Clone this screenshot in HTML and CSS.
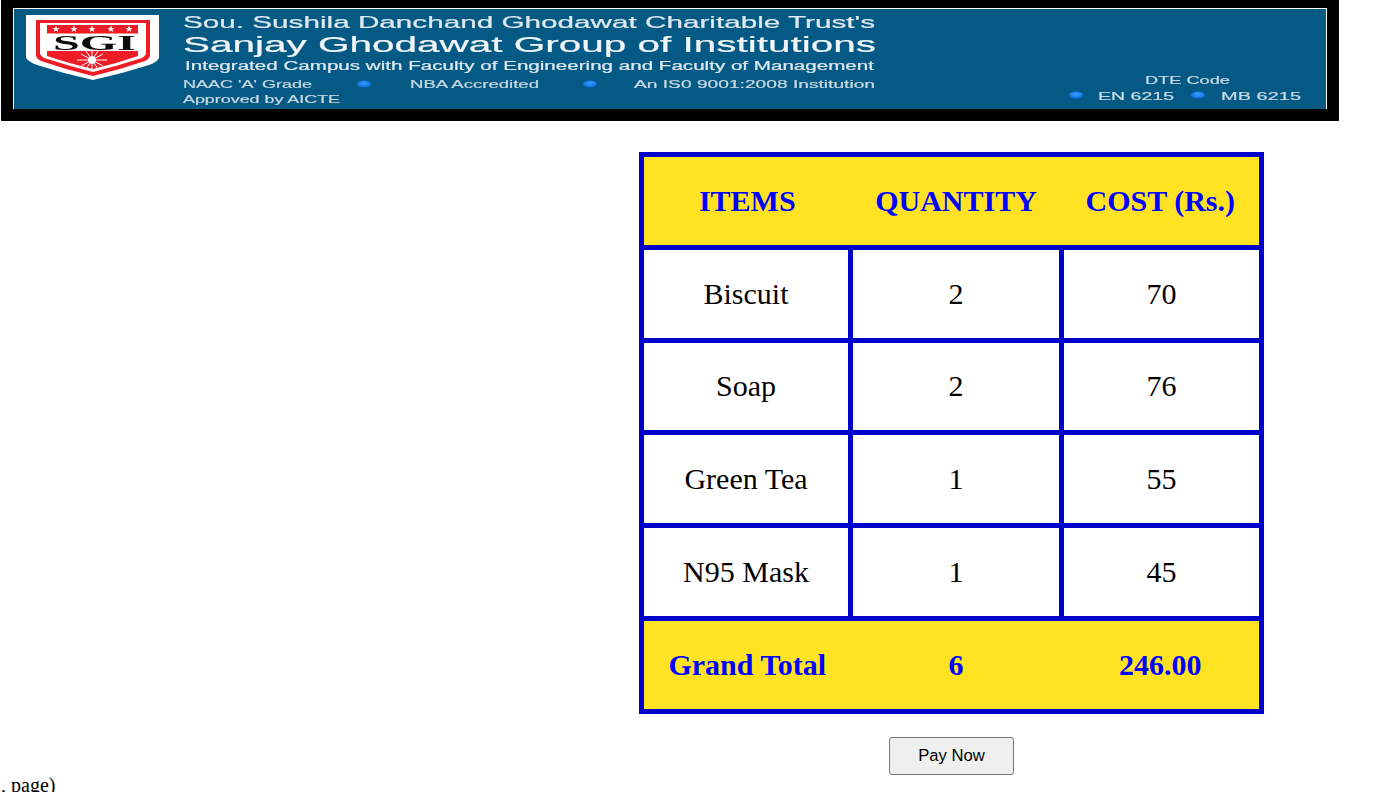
FILE: index.html
```html
<!DOCTYPE html>
<html lang="en">
<head>
<meta charset="utf-8">
<title>Bill</title>
<link rel="stylesheet" href="styles.css">
</head>
<body>
<header class="banner">
<svg class="banner-art" width="1338" height="121" viewBox="0 0 1338 121" xmlns="http://www.w3.org/2000/svg">
  <defs>
    <filter id="soft" x="-2%" y="-2%" width="104%" height="104%"><feGaussianBlur stdDeviation="0.5"/></filter>
    <radialGradient id="dot" cx="50%" cy="40%" r="60%"><stop offset="0" stop-color="#35a2ff"/><stop offset="1" stop-color="#0a68e0"/></radialGradient>
  </defs>
  <rect class="b-black" width="1338" height="121"/>
  <rect class="b-white" x="12" y="8" width="1314" height="101"/>
  <rect class="b-blue" x="13" y="9" width="1312" height="100"/>
  <g filter="url(#soft)" transform="translate(-2 0)">
    <path class="s-white" d="M27 15H160V58Q158 62 150 65Q122 74 94 80Q66 74 38 65Q30 62 27 58Z"/>
    <path class="s-red" d="M37 20H151V56Q150 59 146 61Q120 70 94 76Q68 70 42 61Q38 59 37 56Z"/>
    <path class="s-white" d="M41 23H147V54Q146 56 143 58Q118 66 94 72Q70 66 45 58Q42 56 41 54Z"/>
    <rect class="s-red" x="48" y="25" width="91" height="8.500"/>
    <path class="s-red" d="M48 51H139V56Q116 64 94 69Q72 64 48 56Z"/>
    <g class="s-star">
      <path d="M57 25.500l1 2.400h2.500l-2 1.600.8 2.500-2.300-1.500-2.300 1.500.8-2.500-2-1.600h2.500z"/>
      <path d="M75 25.500l1 2.400h2.500l-2 1.600.8 2.500-2.300-1.500-2.300 1.500.8-2.500-2-1.600h2.500z"/>
      <path d="M93 25.500l1 2.400h2.500l-2 1.600.8 2.500-2.300-1.500-2.300 1.500.8-2.500-2-1.600h2.500z"/>
      <path d="M112 25.500l1 2.400h2.500l-2 1.600.8 2.500-2.300-1.500-2.300 1.500.8-2.500-2-1.600h2.500z"/>
      <path d="M130 25.500l1 2.400h2.500l-2 1.600.8 2.500-2.300-1.500-2.300 1.500.8-2.500-2-1.600h2.500z"/>
    </g>
    <text class="t-sgi" x="54" y="49.500" textLength="83" lengthAdjust="spacingAndGlyphs">SGI</text>
    <g class="s-sun">
      <circle cx="93" cy="60" r="3.500"/>
      <path d="M78 60H108M82 54L104 66M82 66L104 54M87 51L99 69M99 51L87 69M93 50V70"/>
    </g>
    <text class="t-l1" x="184" y="28" textLength="692" lengthAdjust="spacingAndGlyphs">Sou. Sushila Danchand Ghodawat Charitable Trust's</text>
    <text class="t-l2" x="184" y="52" textLength="693" lengthAdjust="spacingAndGlyphs">Sanjay Ghodawat Group of Institutions</text>
    <text class="t-l3" x="186" y="69.500" textLength="689" lengthAdjust="spacingAndGlyphs">Integrated Campus with Faculty of Engineering and Faculty of Management</text>
    <text class="t-s" x="184" y="87.500" textLength="129" lengthAdjust="spacingAndGlyphs">NAAC 'A' Grade</text>
    <text class="t-s" x="411" y="87.500" textLength="129" lengthAdjust="spacingAndGlyphs">NBA Accredited</text>
    <text class="t-s" x="635" y="87.500" textLength="241" lengthAdjust="spacingAndGlyphs">An IS0 9001:2008 Institution</text>
    <text class="t-s" x="184" y="102.500" textLength="157" lengthAdjust="spacingAndGlyphs">Approved by AICTE</text>
    <text class="t-s" x="1146" y="83.500" textLength="85" lengthAdjust="spacingAndGlyphs">DTE Code</text>
    <text class="t-s" x="1099" y="99.500" textLength="76" lengthAdjust="spacingAndGlyphs">EN 6215</text>
    <text class="t-s" x="1222" y="99.500" textLength="80" lengthAdjust="spacingAndGlyphs">MB 6215</text>
    <ellipse cx="365" cy="84" rx="7" ry="3.500" fill="url(#dot)"/>
    <ellipse cx="591" cy="84" rx="7" ry="3.500" fill="url(#dot)"/>
    <ellipse cx="1077" cy="95" rx="7" ry="3.500" fill="url(#dot)"/>
    <ellipse cx="1199" cy="95" rx="7" ry="3.500" fill="url(#dot)"/>
  </g>
</svg>
</header>
<main class="bill">
  <table class="bill-table">
    <colgroup><col class="col-a"><col class="col-b"><col class="col-c"></colgroup>
    <thead>
      <tr class="band"><th>ITEMS</th><th>QUANTITY</th><th>COST (Rs.)</th></tr>
    </thead>
    <tbody>
      <tr><td>Biscuit</td><td>2</td><td>70</td></tr>
      <tr><td>Soap</td><td>2</td><td>76</td></tr>
      <tr><td>Green Tea</td><td>1</td><td>55</td></tr>
      <tr><td>N95 Mask</td><td>1</td><td>45</td></tr>
    </tbody>
    <tfoot>
      <tr class="band"><th>Grand Total</th><th>6</th><th>246.00</th></tr>
    </tfoot>
  </table>
  <button class="pay" type="button">Pay Now</button>
</main>
<p class="trace">, page)</p>
</body>
</html>
```
FILE: styles.css
```css
html, body { margin: 0; padding: 0; background: #fff; }
body { height: 792px; overflow: hidden; }
.banner { padding-left: 1px; height: 121px; }
.banner-art { display: block; }
.b-black { fill: #000; }
.b-white { fill: #fff; }
.b-blue { fill: #045a84; }
.s-white { fill: #fff; }
.s-red { fill: #ee1c25; }
.s-star { fill: #fff; }
.s-sun { fill: #fff; stroke: #fff; stroke-width: 1; }
.t-sgi { font: bold 22px "Liberation Serif", serif; fill: #111; }
.t-l1, .t-l2, .t-l3, .t-s { font-family: "Liberation Sans", sans-serif; fill: #dfe9ef; stroke: #dfe9ef; stroke-width: 0.2; }
.t-l1 { font-size: 17px; }
.t-l2 { font-size: 22.5px; fill: #f2f6f8; stroke: #f2f6f8; }
.t-l3 { font-size: 12px; }
.t-s { font-size: 11px; fill: #c9d9e3; stroke: #c9d9e3; }
.bill { display: flex; flex-direction: column; align-items: center; width: 625px; margin: 31px 0 0 639px; }
.bill-table { border-collapse: collapse; width: 625px; table-layout: fixed; border: 5px solid #0000cd; font-family: "Liberation Serif", serif; font-size: 30px; }
.col-a { width: 209px; }
.col-b { width: 211px; }
.col-c { width: 200px; }
.bill-table th, .bill-table td { padding: 0; text-align: center; height: 87.800px; }
.bill-table td { border: 5px solid #0000cd; color: #000; }
.band { background: #ffe322; color: #0000ff; }
.pay { margin-top: 23px; width: 125px; height: 38px; padding: 0; background: #efefef; border: 1px solid #767676; border-radius: 3px; color: #000; font: 16.67px "Liberation Sans", sans-serif; }
.trace { margin: 0 0 0 1px; font: 20px/21px "Liberation Serif", serif; color: #000; }
```
